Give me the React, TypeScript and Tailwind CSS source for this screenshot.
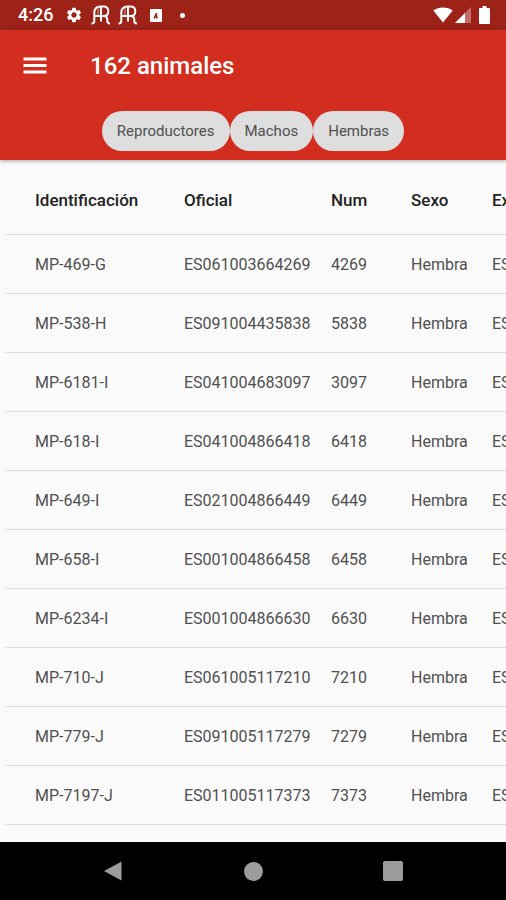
import { MdSettings } from "react-icons/md";

const filters = ["Reproductores", "Machos", "Hembras"];

const columns = ["Identificación", "Oficial", "Num", "Sexo", "Explotación"];

const animals = [
  { id: "MP-469-G", official: "ES061003664269", num: "4269" },
  { id: "MP-538-H", official: "ES091004435838", num: "5838" },
  { id: "MP-6181-I", official: "ES041004683097", num: "3097" },
  { id: "MP-618-I", official: "ES041004866418", num: "6418" },
  { id: "MP-649-I", official: "ES021004866449", num: "6449" },
  { id: "MP-658-I", official: "ES001004866458", num: "6458" },
  { id: "MP-6234-I", official: "ES001004866630", num: "6630" },
  { id: "MP-710-J", official: "ES061005117210", num: "7210" },
  { id: "MP-779-J", official: "ES091005117279", num: "7279" },
  { id: "MP-7197-J", official: "ES011005117373", num: "7373" },
];

// Arch with a centre stem, a crossbar and the leg of an R
function BrandIcon() {
  return (
    <svg width="20" height="20" viewBox="0 0 20 20" fill="none" stroke="currentColor" strokeWidth="2" aria-hidden="true">
      <path d="M.5 18.5c2 0 2.800-.8 2.800-2.500V8C3.300 4 5.500 1.500 9.500 1.500h3C15.800 1.500 17.300 3.500 17.300 6.200S15.800 11 12.800 11H3.500" />
      <path d="M10 1.500V16.500M13 11c2.500.2 3.300 1.200 3.300 3.500v1.800q0 2 2.700 2.200" />
      <path d="M7 2.500V11" strokeWidth="1" opacity=".6" />
    </svg>
  );
}

function StatusBar() {
  return (
    <div className="flex h-[30px] shrink-0 items-center justify-between bg-[#9d2218] pr-4 pl-[18px] text-white">
      <div className="flex items-center">
        <span className="w-[47px] text-lg font-medium">4:26</span>
        <MdSettings className="mr-2 size-[18px]" />
        <BrandIcon />
        <span className="w-[7px]" />
        <BrandIcon />
        <svg className="ml-3" width="12" height="13" viewBox="0 0 12 13" aria-hidden="true">
          <rect width="12" height="13" rx="1" fill="currentColor" />
          <path d="M4 9.500 6.500 4v5.500M4.500 7.500l3.500 1" fill="none" stroke="#9d2218" strokeWidth="1.300" />
        </svg>
        <span className="ml-[18px] size-[5px] rounded-full bg-white" />
      </div>
      <div className="flex items-center">
        <svg width="20" height="16" viewBox="0 0 20 16" fill="currentColor" aria-hidden="true">
          <path d="M10 15.500.300 3.500C5.500-.600 14.500-.600 19.700 3.500z" />
        </svg>
        <svg className="ml-0.5" width="16" height="16" viewBox="0 0 16 16" fill="currentColor" aria-hidden="true">
          <path d="M16 0v16H0z" opacity=".35" />
          <path d="M10 6v10H0z" />
        </svg>
        <svg className="ml-2" width="11" height="18" viewBox="0 0 11 18" fill="currentColor" aria-hidden="true">
          <path d="M3.500 0h4v2H10q1 0 1 1v14q0 1-1 1H1q-1 0-1-1V3q0-1 1-1h2.500z" />
        </svg>
      </div>
    </div>
  );
}

function AppBar() {
  return (
    <header className="relative shrink-0 bg-[#d32d20] pb-[9px] shadow-[0_1px_4px_rgba(0,0,0,0.35)]">
      <div className="flex h-[71px] items-center pl-5">
        <button type="button" aria-label="Menú" className="text-white">
          <svg width="30" height="30" viewBox="0 0 30 30" fill="currentColor" aria-hidden="true">
            <path d="M3.500 6.500h23v3h-23zM3.500 13h23v3h-23zM3.500 19.500h23v3h-23z" />
          </svg>
        </button>
        <h1 className="ml-10 text-2xl font-medium text-white">162 animales</h1>
      </div>
      <div className="mt-[10px] flex justify-center">
        {filters.map((filter) => (
          <button
            key={filter}
            type="button"
            className="h-10 rounded-full bg-[#dedede] px-[15px] text-[15px] text-[#505050]"
          >
            {filter}
          </button>
        ))}
      </div>
    </header>
  );
}

function AnimalTable() {
  return (
    <main className="min-h-0 flex-1 overflow-auto pl-1.5 [scrollbar-width:none]">
      <table className="w-full min-w-[620px] table-fixed text-left text-base text-[#505050]">
        <colgroup>
          <col className="w-[178px]" />
          <col className="w-[147px]" />
          <col className="w-20" />
          <col className="w-[81px]" />
          <col />
        </colgroup>
        <thead>
          <tr className="h-[74px] border-b border-[#dddddd] text-[17px] text-[#222222]">
            {columns.map((column) => (
              <th key={column} scope="col" className="pt-2 font-medium first:pl-[29px]">
                {column}
              </th>
            ))}
          </tr>
        </thead>
        <tbody>
          {animals.map((animal) => (
            <tr key={animal.id} className="h-[59px] border-b border-[#dddddd] *:pt-0.5">
              <td className="pl-[29px]">{animal.id}</td>
              <td>{animal.official}</td>
              <td>{animal.num}</td>
              <td>Hembra</td>
              <td>ES</td>
            </tr>
          ))}
        </tbody>
      </table>
    </main>
  );
}

function NavigationBar() {
  return (
    <nav className="flex h-[58px] shrink-0 items-center justify-center gap-[120px] bg-black text-[#9c9c9c]">
      <button type="button" aria-label="Atrás">
        <svg width="20" height="22" viewBox="0 0 20 22" fill="currentColor" aria-hidden="true">
          <path d="M17.500 1.500v19L0 11z" />
        </svg>
      </button>
      <button type="button" aria-label="Inicio" className="size-[19px] rounded-full bg-[#9c9c9c]" />
      <button type="button" aria-label="Recientes" className="size-5 rounded-[2px] bg-[#9c9c9c]" />
    </nav>
  );
}

export default function App() {
  return (
    <div className="flex h-screen flex-col bg-[#fafafa] font-[Roboto,sans-serif]">
      <StatusBar />
      <AppBar />
      <AnimalTable />
      <NavigationBar />
    </div>
  );
}
